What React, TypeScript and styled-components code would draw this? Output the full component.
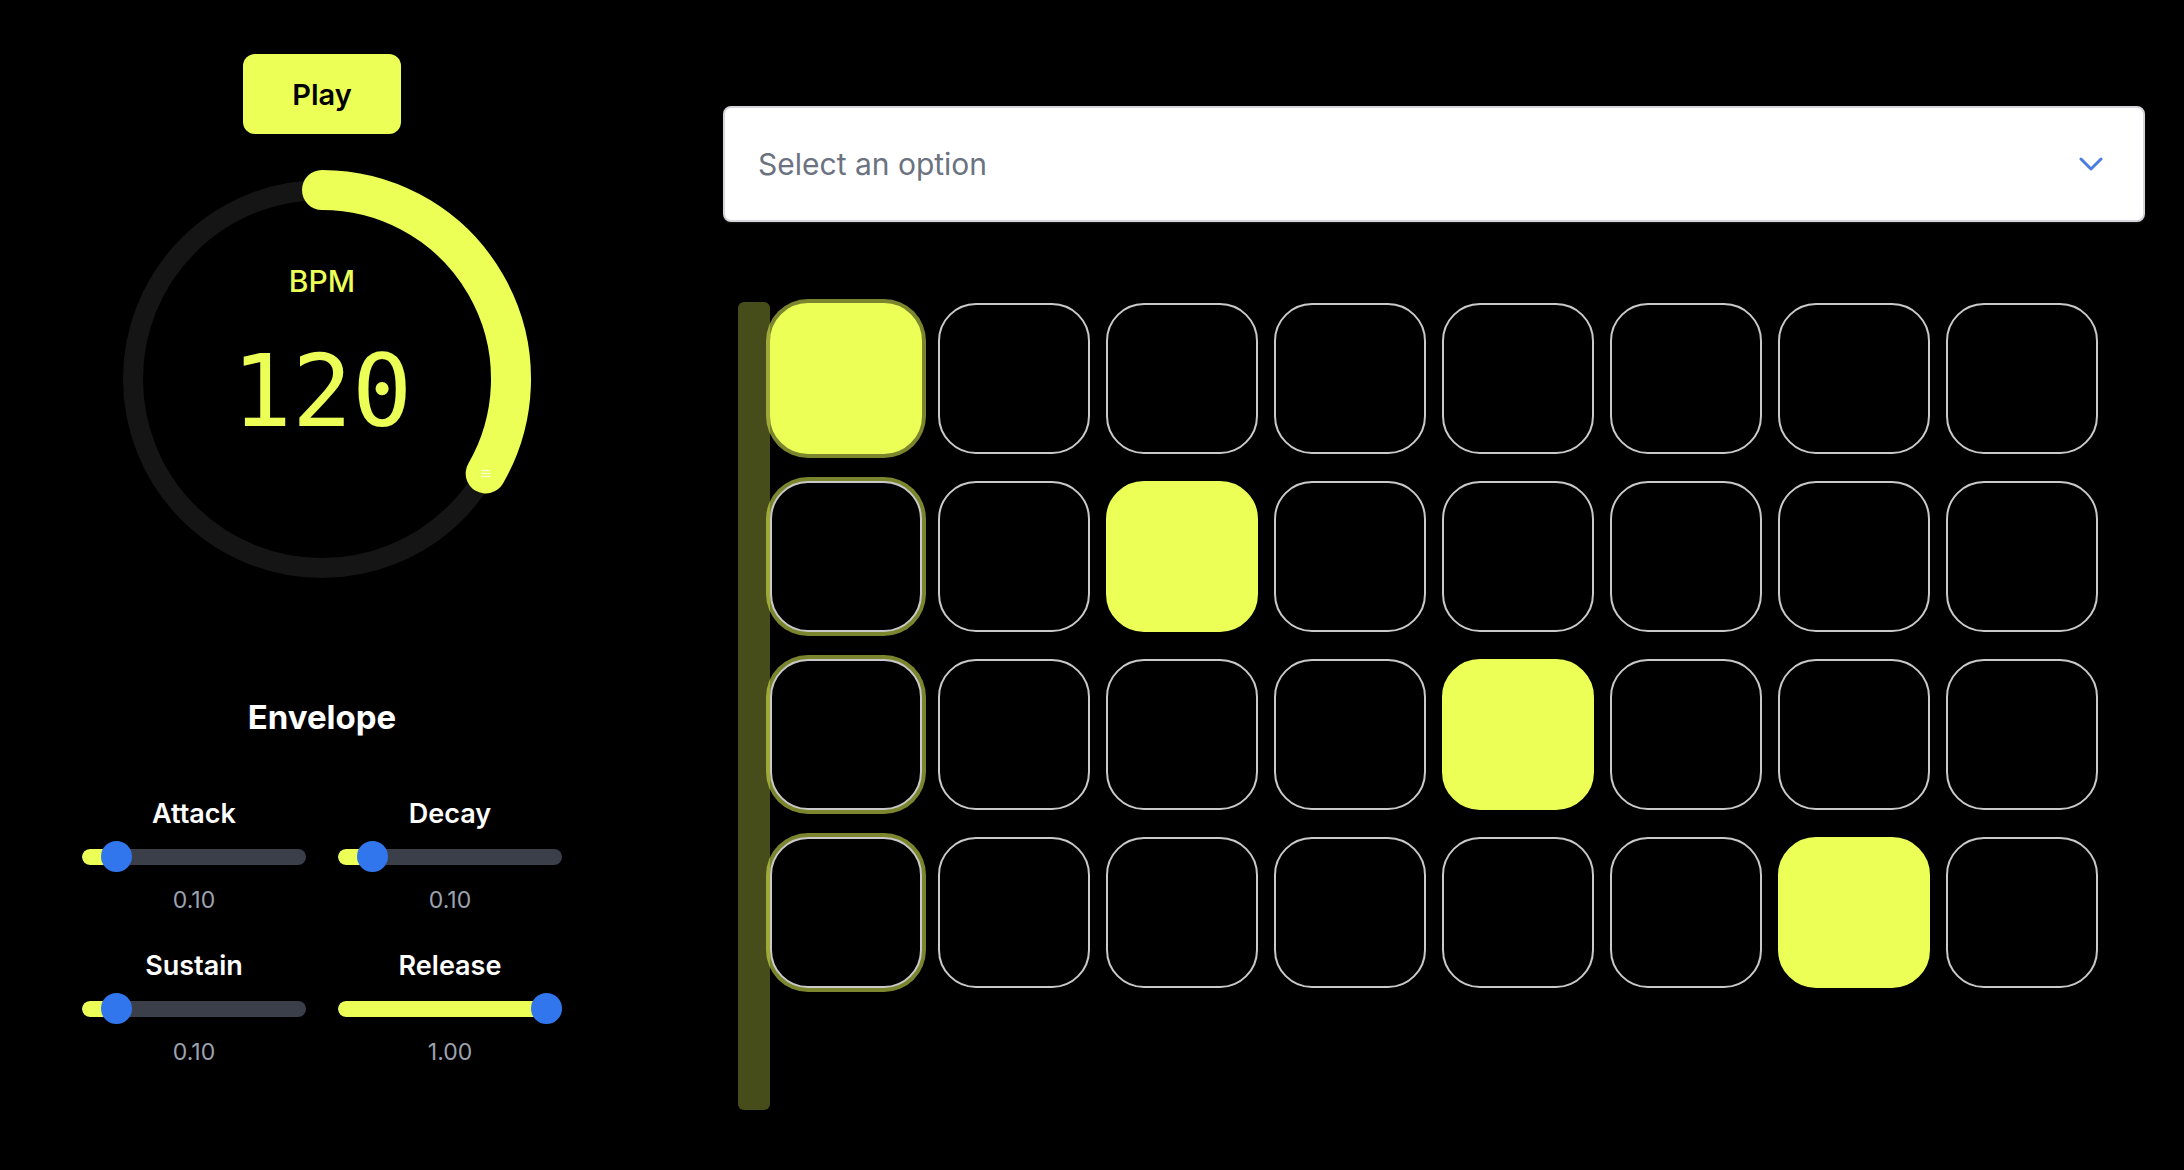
import React from "react";
import styled, { createGlobalStyle } from "styled-components";

const YELLOW = "#ebff57";

const GlobalStyle = createGlobalStyle`
  html, body {
    margin: 0;
    padding: 0;
    background: #000;
  }
  body {
    font-family: Inter, "Noto Sans", "Liberation Sans", sans-serif;
    color: #fff;
  }
  * { box-sizing: border-box; }
`;

const Page = styled.div`
  display: flex;
  flex-direction: row;
  align-items: flex-start;
  width: 2184px;
  min-height: 1170px;
  background: #000;
`;

const LeftColumn = styled.div`
  width: 644px;
  display: flex;
  flex-direction: column;
  align-items: center;
  padding-top: 54px;
`;

const PlayButton = styled.button`
  width: 158px;
  height: 80px;
  border: none;
  border-radius: 12px;
  background: ${YELLOW};
  color: #000;
  font-family: Inter, "Liberation Sans", sans-serif;
  font-size: 29px;
  font-weight: 600;
  cursor: pointer;
`;

const Dial = styled.div`
  position: relative;
  width: 420px;
  height: 420px;
  margin-top: 35px;
  display: flex;
  flex-direction: column;
  align-items: center;
  padding-top: 97px;
`;

const DialSvg = styled.svg`
  position: absolute;
  inset: 0;
`;

const DialLabel = styled.div`
  position: relative;
  font-size: 30px;
  line-height: 1;
  font-weight: 500;
  color: ${YELLOW};
`;

const DialValue = styled.div`
  position: relative;
  margin-top: 46px;
  font-family: "DejaVu Sans Mono", "Liberation Mono", monospace;
  font-size: 100px;
  line-height: 1;
  color: ${YELLOW};
`;

const EnvelopeTitle = styled.h2`
  margin: 112px 0 0;
  font-size: 33px;
  line-height: 1;
  font-weight: 700;
  color: #fff;
`;

const ParamGrid = styled.div`
  margin-top: 66px;
  display: grid;
  grid-template-columns: 224px 224px;
  column-gap: 32px;
  row-gap: 40px;
`;

const Param = styled.div`
  display: flex;
  flex-direction: column;
  align-items: center;
`;

const ParamLabel = styled.div`
  font-size: 27px;
  line-height: 1;
  font-weight: 600;
  color: #fff;
`;

const SliderTrack = styled.div`
  position: relative;
  width: 224px;
  height: 31px;
  margin-top: 14px;
  display: flex;
  align-items: center;
`;

const SliderRail = styled.div`
  width: 100%;
  height: 16px;
  border-radius: 8px;
  background: #3b3f4a;
  overflow: hidden;
`;

const SliderFill = styled.div`
  height: 100%;
  background: ${YELLOW};
  border-radius: 8px;
`;

const SliderThumb = styled.div`
  position: absolute;
  top: 0;
  width: 31px;
  height: 31px;
  border-radius: 50%;
  background: #3276ee;
`;

const ParamValue = styled.div`
  margin-top: 17px;
  font-size: 23px;
  line-height: 1;
  color: #9ca3af;
`;

const RightColumn = styled.div`
  width: 1422px;
  margin-left: 79px;
  padding-top: 106px;
  display: flex;
  flex-direction: column;
`;

const Select = styled.div`
  height: 116px;
  border: 2px solid #d4d6dc;
  border-radius: 8px;
  background: #fff;
  display: flex;
  align-items: center;
  justify-content: space-between;
  padding: 0 40px 0 33px;
  box-shadow: 0 1px 2px rgba(255, 255, 255, 0.1);
`;

const SelectText = styled.span`
  font-size: 30px;
  color: #6b7280;
`;

const Sequencer = styled.div`
  margin-top: 80px;
  margin-left: 15px;
  display: flex;
  flex-direction: row;
  align-items: flex-start;
`;

const PlayheadBar = styled.div`
  width: 32px;
  height: 808px;
  border-radius: 6px;
  background: rgba(235, 255, 87, 0.3);
  flex-shrink: 0;
`;

const CellGrid = styled.div`
  margin-top: 1px;
  display: grid;
  grid-template-columns: repeat(8, 152px);
  grid-auto-rows: 151px;
  column-gap: 16px;
  row-gap: 27px;
`;

const Cell = styled.div<{ $active: boolean; $current: boolean }>`
  border-radius: 38px;
  border: 2px solid ${(p) => (p.$active ? YELLOW : "#c9c9c9")};
  background: ${(p) => (p.$active ? YELLOW : "#000")};
  box-shadow: ${(p) =>
    p.$current ? "0 0 0 4px rgba(235, 255, 87, 0.52)" : "none"};
`;

const ChevronIcon = () => (
  <svg width="24" height="14" viewBox="0 0 24 14" fill="none">
    <path
      d="M2 2 L12 12 L22 2"
      stroke="#4a7de0"
      strokeWidth="3"
      strokeLinecap="round"
      strokeLinejoin="round"
    />
  </svg>
);

const BpmDial = ({ bpm }: { bpm: number }) => {
  const cx = 210;
  const cy = 210;
  const r = 189;
  const frac = (bpm - 60) / (240 - 60);
  const ang = frac * 2 * Math.PI;
  const ex = cx + r * Math.sin(ang);
  const ey = cy - r * Math.cos(ang);
  const large = frac > 0.5 ? 1 : 0;
  return (
    <Dial>
      <DialSvg width="420" height="420" viewBox="0 0 420 420">
        <circle cx={cx} cy={cy} r={r} fill="none" stroke="#151515" strokeWidth="20" />
        <path
          d={`M ${cx} ${cy - r} A ${r} ${r} 0 ${large} 1 ${ex} ${ey}`}
          fill="none"
          stroke={YELLOW}
          strokeWidth="40"
          strokeLinecap="round"
        />
        <g stroke="rgba(255,255,255,0.75)" strokeWidth="1.2">
          <line x1={ex - 4.5} y1={ey - 3} x2={ex + 4.5} y2={ey - 3} />
          <line x1={ex - 4.5} y1={ey} x2={ex + 4.5} y2={ey} />
          <line x1={ex - 4.5} y1={ey + 3} x2={ex + 4.5} y2={ey + 3} />
        </g>
      </DialSvg>
      <DialLabel>BPM</DialLabel>
      <DialValue>{bpm}</DialValue>
    </Dial>
  );
};

const Slider = ({ label, value }: { label: string; value: number }) => {
  const w = 224;
  const d = 31;
  const thumbLeft = value * (w - d);
  const fill = thumbLeft + d / 2;
  return (
    <Param>
      <ParamLabel>{label}</ParamLabel>
      <SliderTrack>
        <SliderRail>
          <SliderFill style={{ width: `${fill}px` }} />
        </SliderRail>
        <SliderThumb style={{ left: `${thumbLeft}px` }} />
      </SliderTrack>
      <ParamValue>{value.toFixed(2)}</ParamValue>
    </Param>
  );
};

const pattern = [[0], [2], [4], [6]];

export default function App() {
  const currentStep = 0;
  return (
    <>
      <GlobalStyle />
      <Page>
        <LeftColumn>
          <PlayButton>Play</PlayButton>
          <BpmDial bpm={120} />
          <EnvelopeTitle>Envelope</EnvelopeTitle>
          <ParamGrid>
            <Slider label="Attack" value={0.1} />
            <Slider label="Decay" value={0.1} />
            <Slider label="Sustain" value={0.1} />
            <Slider label="Release" value={1} />
          </ParamGrid>
        </LeftColumn>
        <RightColumn>
          <Select>
            <SelectText>Select an option</SelectText>
            <ChevronIcon />
          </Select>
          <Sequencer>
            <PlayheadBar />
            <CellGrid>
              {pattern.map((row, ri) =>
                Array.from({ length: 8 }).map((_, ci) => (
                  <Cell
                    key={`${ri}-${ci}`}
                    $active={row.includes(ci)}
                    $current={ci === currentStep}
                  />
                ))
              )}
            </CellGrid>
          </Sequencer>
        </RightColumn>
      </Page>
    </>
  );
}
